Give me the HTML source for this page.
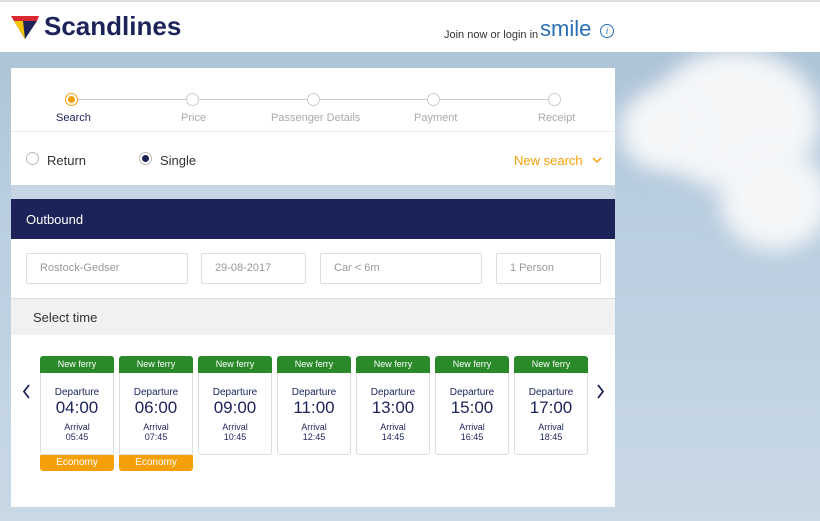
<!DOCTYPE html><html><head><style>
body{margin:0;width:820px;height:521px;overflow:hidden;font-family:"Liberation Sans",sans-serif;position:relative;background:linear-gradient(180deg,#a9c0d4 0%,#b9cee0 40%,#c9d8e5 100%)}
.hdr{position:absolute;left:0;top:0;width:820px;height:52px;background:#fff;border-top:2px solid #ddd;box-sizing:border-box}
.cloud{position:absolute;border-radius:50%;background:#f4f6f8;filter:blur(10px)}
.panel{position:absolute;left:11px;top:68px;width:604px;height:439px;background:#fff}
.t{position:absolute;white-space:nowrap}
.dot{position:absolute;width:11px;height:11px;border:1px solid #ccc;border-radius:50%;background:#fff;top:25px}
.in{position:absolute;top:185px;border:1px solid #ddd;border-radius:2px;color:#999;font-size:11px;line-height:29px;padding-left:13px;box-sizing:border-box;height:31px}
.card{position:absolute;top:288px;width:72px;height:97px;border:1px solid #ddd;border-radius:3px;text-align:center;color:#1b2359;background:#fff}
.card .g{background:#2a8a2a;color:#fff;font-size:9px;height:17px;line-height:17px;border-radius:3px 3px 0 0;margin:-1px -1px 0}
.card .e{position:absolute;left:-1px;right:-1px;bottom:-17px;height:16px;background:#f5a00a;color:#fff;font-size:10px;line-height:16px;border-radius:0 0 3px 3px}
</style></head><body>
<div class="cloud" style="left:650px;top:50px;width:170px;height:140px"></div>
<div class="cloud" style="left:720px;top:150px;width:110px;height:100px"></div>
<div class="cloud" style="left:620px;top:90px;width:80px;height:80px"></div>
<div class="hdr">
<svg style="position:absolute;left:11px;top:14px" width="30" height="24"><polygon points="0,0 28,0 26,5 3,5" fill="#d9282f"/><polygon points="3,5 26,5 14,23" fill="#1b2359"/><polygon points="3,5 12,5 14,23" fill="#f5c400"/></svg>
<div class="t" style="left:44px;top:9px;font-size:26px;font-weight:bold;color:#1b2359">Scandlines</div>
<div class="t" style="left:444px;top:27px;font-size:11px;color:#333">Join now or login in</div>
<div class="t" style="left:540px;top:14px;font-size:22px;color:#2a6fb5">smile</div>
<div class="t" style="left:600px;top:22px;width:12px;height:12px;border:1px solid #2a6fb5;border-radius:50%;font-size:9px;color:#2a6fb5;text-align:center;line-height:12px;font-style:italic">i</div>
</div>
<div class="panel">
<div style="position:absolute;left:60px;top:31px;width:485px;height:1px;background:#ccc"></div>
<div class="dot" style="left:54px;border-color:#f5a00a"><div style="margin:2px;width:7px;height:7px;border-radius:50%;background:#f5a00a"></div></div>
<div class="dot" style="left:175px"></div><div class="dot" style="left:296px"></div><div class="dot" style="left:416px"></div><div class="dot" style="left:537px"></div>
<div class="t" style="left:45px;top:44px;font-size:11px;color:#1b2359">Search</div>
<div class="t" style="left:170px;top:44px;font-size:11px;color:#aaa">Price</div>
<div class="t" style="left:260px;top:44px;font-size:11px;color:#aaa">Passenger Details</div>
<div class="t" style="left:403px;top:44px;font-size:11px;color:#aaa">Payment</div>
<div class="t" style="left:527px;top:44px;font-size:11px;color:#aaa">Receipt</div>
<div style="position:absolute;left:0;top:63px;width:604px;height:1px;background:#eee"></div>
<div style="position:absolute;left:15px;top:84px;width:11px;height:11px;border:1px solid #bbb;border-radius:50%"></div>
<div class="t" style="left:36px;top:85px;font-size:13px;color:#333">Return</div>
<div style="position:absolute;left:128px;top:84px;width:11px;height:11px;border:1px solid #bbb;border-radius:50%"><div style="margin:2px;width:7px;height:7px;border-radius:50%;background:#1b2359"></div></div>
<div class="t" style="left:149px;top:85px;font-size:13px;color:#333">Single</div>
<div class="t" style="left:503px;top:85px;font-size:13px;color:#f5a00a">New search</div>
<svg style="position:absolute;left:581px;top:89px" width="10" height="7"><path d="M1 1 L5 5 L9 1" stroke="#f5a00a" stroke-width="1.5" fill="none"/></svg>
<div style="position:absolute;left:0;top:117px;width:604px;height:14px;background:#c5d5e3"></div>
<div style="position:absolute;left:0;top:131px;width:604px;height:40px;background:#1b2359"></div>
<div class="t" style="left:15px;top:144px;font-size:13px;color:#fff">Outbound</div>
<div class="in" style="left:15px;width:162px">Rostock-Gedser</div>
<div class="in" style="left:190px;width:105px">29-08-2017</div>
<div class="in" style="left:309px;width:162px">Car &lt; 6m</div>
<div class="in" style="left:485px;width:105px">1 Person</div>
<div style="position:absolute;left:0;top:230px;width:604px;height:36px;background:#f1f1f1;border-top:1px solid #ddd"></div>
<div class="t" style="left:22px;top:242px;font-size:13px;color:#333">Select time</div>
<svg style="position:absolute;left:11px;top:316px" width="9" height="15"><path d="M7 1 L2 7.5 L7 14" stroke="#1b2359" stroke-width="1.8" fill="none"/></svg>
<svg style="position:absolute;left:585px;top:316px" width="9" height="15"><path d="M2 1 L7 7.5 L2 14" stroke="#1b2359" stroke-width="1.8" fill="none"/></svg>
</div>
<div style="position:absolute;left:11px;top:0">
<div class="card" style="left:29px;top:356px"><div class="g">New ferry</div><div style="font-size:10px;margin-top:14px">Departure</div><div style="font-size:17px">04:00</div><div style="font-size:9px;margin-top:4px">Arrival<br>05:45</div><div class="e">Economy</div></div>
<div class="card" style="left:108px;top:356px"><div class="g">New ferry</div><div style="font-size:10px;margin-top:14px">Departure</div><div style="font-size:17px">06:00</div><div style="font-size:9px;margin-top:4px">Arrival<br>07:45</div><div class="e">Economy</div></div>
<div class="card" style="left:187px;top:356px"><div class="g">New ferry</div><div style="font-size:10px;margin-top:14px">Departure</div><div style="font-size:17px">09:00</div><div style="font-size:9px;margin-top:4px">Arrival<br>10:45</div></div>
<div class="card" style="left:266px;top:356px"><div class="g">New ferry</div><div style="font-size:10px;margin-top:14px">Departure</div><div style="font-size:17px">11:00</div><div style="font-size:9px;margin-top:4px">Arrival<br>12:45</div></div>
<div class="card" style="left:345px;top:356px"><div class="g">New ferry</div><div style="font-size:10px;margin-top:14px">Departure</div><div style="font-size:17px">13:00</div><div style="font-size:9px;margin-top:4px">Arrival<br>14:45</div></div>
<div class="card" style="left:424px;top:356px"><div class="g">New ferry</div><div style="font-size:10px;margin-top:14px">Departure</div><div style="font-size:17px">15:00</div><div style="font-size:9px;margin-top:4px">Arrival<br>16:45</div></div>
<div class="card" style="left:503px;top:356px"><div class="g">New ferry</div><div style="font-size:10px;margin-top:14px">Departure</div><div style="font-size:17px">17:00</div><div style="font-size:9px;margin-top:4px">Arrival<br>18:45</div></div>
</div>
</body></html>
